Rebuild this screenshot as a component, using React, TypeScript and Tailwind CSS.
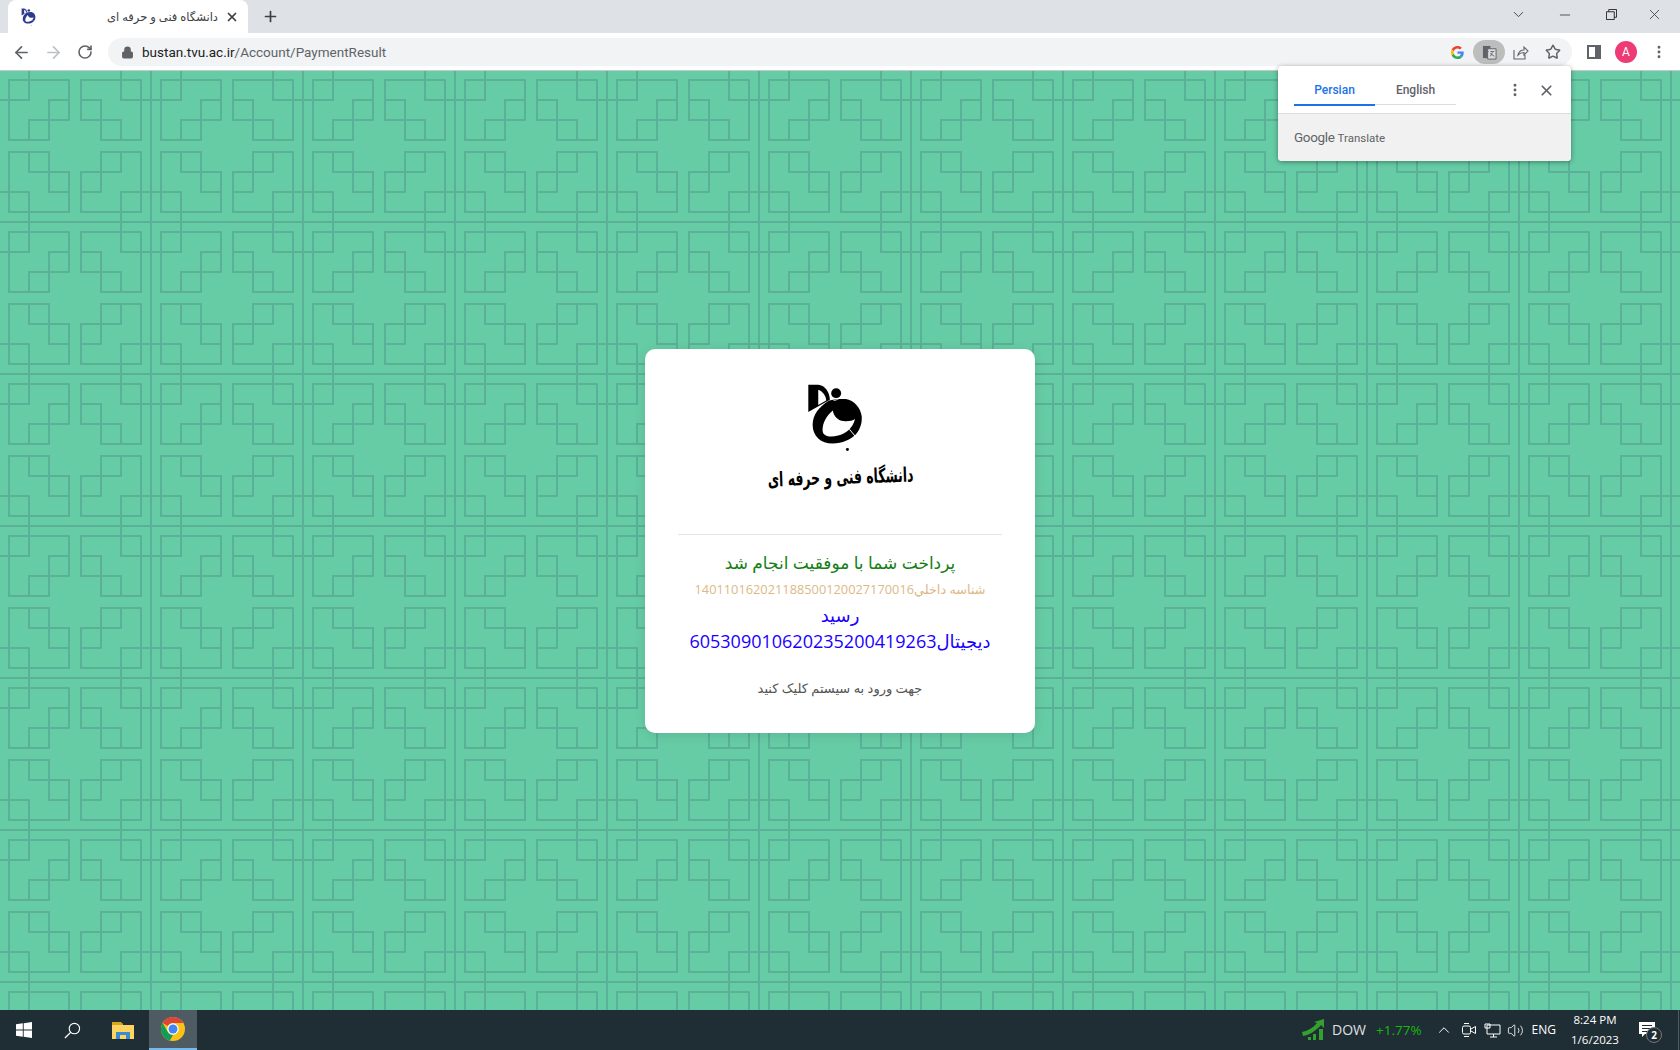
import { Plus, X, ArrowLeft, ArrowRight, RotateCw, Lock, ChevronDown, Minus, Star, MoreVertical, ChevronUp, Volume2 } from 'lucide-react'

const FA = 'font-["Open_Sans","DejaVu_Sans",sans-serif]'

function LatticeBackground() {
  return (
    <svg className="absolute inset-0 h-full w-full" aria-hidden="true">
      <defs>
        <pattern id="lattice" x="0" y="-1" width="152" height="152" patternUnits="userSpaceOnUse">
          <g fill="none" stroke="#5ab197" strokeWidth="2">
            <path d="M9 10H69V50H49V70H9Z" />
            <path d="M29 0V30H0M49 50H29V70M49 50V30H69" />
            <path d="M141 10H81V50H101V70H141Z" />
            <path d="M121 0V30H152M101 50H121V70M101 50V30H81" />
            <path d="M9 142H69V102H49V82H9Z" />
            <path d="M29 152V122H0M49 102H29V82M49 102V122H69" />
            <path d="M141 142H81V102H101V82H141Z" />
            <path d="M121 152V122H152M101 102H121V82M101 102V122H81" />
            <path d="M151 0V152M0 152H152M0 0H152" />
          </g>
        </pattern>
      </defs>
      <rect width="100%" height="100%" fill="url(#lattice)" />
    </svg>
  )
}

function LogoMark({ color, className }: { color: string; className: string }) {
  return (
    <svg viewBox="15 10 175 210" className={className} aria-hidden="true">
      <path d="M85 62C55 80 35 105 35 135C35 170 60 192 95 192C125 192 150 180 165 165C178 150 185 130 183 110C180 85 160 62 135 58L110 58Z" fill={color} />
      <path d="M22 15H52C72 17 86 36 87 60L22 97Z" fill={color} />
      <path d="M52 30C66 36 75 48 76 62L52 76Z" fill="#fff" />
      <circle cx="106" cy="40" r="15" fill={color} />
      <path d="M98 62C106 62 114 58 119 52" fill="none" stroke="#fff" strokeWidth="2.500" />
      <path d="M96 92C75 110 65 130 65 152C65 172 90 174 112 168C135 162 155 148 163 118C155 124 140 126 128 124C110 122 98 108 96 92Z" fill="#fff" />
      <path d="M146 149L166 173" fill="none" stroke="#fff" strokeWidth="3" />
      <circle cx="140" cy="210" r="4.500" fill={color} />
    </svg>
  )
}

function ChromeIcon() {
  return (
    <svg viewBox="0 0 48 48" className="h-6 w-6" aria-hidden="true">
      <circle cx="24" cy="24" r="24" fill="#fbc116" />
      <path d="M24 0A24 24 0 0 1 44.8 12H24A12 12 0 0 0 13.6 18L3.2 12A24 24 0 0 1 24 0Z" fill="#db4437" />
      <path d="M3.2 12L13.6 30A12 12 0 0 0 24 36L17.5 47.1A24 24 0 0 1 3.2 12Z" fill="#0f9d58" />
      <circle cx="24" cy="24" r="11.5" fill="#fff" />
      <circle cx="24" cy="24" r="9" fill="#4285f4" />
    </svg>
  )
}

function GoogleG() {
  return (
    <svg viewBox="0 0 48 48" className="h-[13px] w-[13px]" aria-hidden="true">
      <path fill="#ea4335" d="M24 9.500c3.500 0 6.700 1.300 9.100 3.500l6.800-6.800C35.800 2.400 30.200 0 24 0 14.600 0 6.500 5.400 2.600 13.200l7.900 6.100C12.400 13.600 17.700 9.500 24 9.500z" />
      <path fill="#4285f4" d="M46.900 24.500c0-1.600-.1-3.100-.4-4.500H24v9h12.900c-.6 3-2.200 5.500-4.700 7.200l7.700 6c4.500-4.200 7-10.300 7-17.700z" />
      <path fill="#fbbc05" d="M10.500 28.700c-.5-1.400-.8-3-.8-4.700s.3-3.200.8-4.700l-7.900-6.100C.9 16.500 0 20.100 0 24s.9 7.500 2.600 10.800l7.900-6.100z" />
      <path fill="#34a853" d="M24 48c6.500 0 11.900-2.100 15.900-5.800l-7.700-6c-2.200 1.400-4.900 2.300-8.200 2.300-6.300 0-11.600-4.200-13.500-9.900l-7.900 6.200C6.500 42.600 14.600 48 24 48z" />
    </svg>
  )
}

function TabStrip() {
  return (
    <div className="flex h-[33px] items-end bg-[#dee1e6]">
      <div className="ml-2 flex h-[33px] w-[240px] items-center rounded-t-lg bg-white pl-[13px] pr-[9px]">
        <LogoMark color="#2e3a8c" className="h-[18px] w-[15px]" />
        <span dir="rtl" className={`ml-auto text-[11.5px] text-[#3c4043] ${FA}`}>دانشگاه فنی و حرفه ای</span>
        <X className="ml-[7px] h-[14px] w-[14px] text-[#3c4043]" strokeWidth={3} />
      </div>
      <Plus className="mb-2 ml-[14px] h-[17px] w-[17px] text-[#3c4043]" strokeWidth={2.4} />
      <div className="ml-auto flex h-[33px] items-center pb-[4px] text-[#3c4043]">
        <ChevronDown className="mr-[30px] h-[17px] w-[17px]" strokeWidth={1.3} />
        <Minus className="mr-[33px] h-4 w-4" strokeWidth={1.3} />
        <svg viewBox="0 0 12 12" className="mr-[29px] h-[11px] w-[11px]" aria-hidden="true">
          <path d="M.5 3H9V11.500H.5ZM3 3V.5H11.500V9H9" fill="none" stroke="#202124" />
        </svg>
        <X className="mr-[17px] h-[17px] w-[17px]" strokeWidth={1.2} />
      </div>
    </div>
  )
}

function Toolbar() {
  return (
    <div className="flex h-[38px] items-center border-b border-[#c8c8c8] bg-white pt-px">
      <ArrowLeft className="ml-[12px] h-[19px] w-[19px] text-[#5f6368]" strokeWidth={2.2} />
      <ArrowRight className="ml-[13px] h-[19px] w-[19px] text-[#bdc1c6]" strokeWidth={2.2} />
      <RotateCw className="ml-[14px] h-[16px] w-[16px] text-[#5f6368]" strokeWidth={2.4} />
      <div className="ml-[15px] flex h-[28px] w-[1464px] items-center rounded-full bg-[#f1f3f4] pl-[13px] pr-[11px]">
        <Lock className="h-[13px] w-[13px] fill-[#5f6368] text-[#5f6368]" />
        <span className='ml-[8px] font-["Roboto",sans-serif] text-[13.5px] text-[#5f6368]'>
          <span className="text-[#202124]">bustan.tvu.ac.ir</span>/Account/PaymentResult
        </span>
        <div className="ml-auto flex items-center">
          <GoogleG />
          <div className="ml-[9px] flex h-[24px] w-[32px] items-center justify-center rounded-full bg-[#bdbdbd]">
            <svg viewBox="0 0 16 16" className="h-[15px] w-[15px]" aria-hidden="true">
              <path d="M1 1H9V14H1Z" fill="#5f6368" />
              <path d="M6 4H15V15H6Z" fill="#dadce0" stroke="#5f6368" />
              <path d="M3 7H7M9 7H13M11 8L9 12M9 9L13 12" stroke="#5f6368" strokeWidth="1" fill="none" />
            </svg>
          </div>
          <svg viewBox="0 0 16 16" className="ml-[8px] h-[16px] w-[16px]" aria-hidden="true">
            <path d="M1 6V15H12V11M5 11C6 7 9 6 11 6V3L15 7L11 11V8.500C9 8.500 7 9 5 11Z" fill="none" stroke="#5f6368" strokeWidth="1.100" />
          </svg>
          <Star className="ml-[16px] h-[16px] w-[16px] text-[#5f6368]" strokeWidth={2.2} />
        </div>
      </div>
      <div className="ml-[15px] flex h-[14px] w-[14px] justify-end border-2 border-[#5f6368] bg-white">
        <div className="h-full w-[4px] bg-[#5f6368]" />
      </div>
      <div className="ml-[14px] flex h-[22px] w-[22px] items-center justify-center rounded-full bg-[#ee3a75] font-['Roboto',sans-serif] text-xs text-white">A</div>
      <MoreVertical className="ml-[14px] h-[16px] w-[16px] text-[#5f6368]" strokeWidth={2.4} />
    </div>
  )
}

function TranslatePopup() {
  return (
    <div className="absolute right-[109px] top-[-5px] z-10 w-[293px] overflow-hidden rounded bg-white font-['Roboto',sans-serif] shadow-[0_1px_5px_rgba(0,0,0,0.4)]">
      <div className="flex h-[48px] border-b border-[#dadce0] pl-4 pr-4">
        <div className="flex h-[39px] w-[162px] border-b border-[#dadce0] pt-[16px] leading-4">
          <span className="-mb-px flex h-[24px] w-[81px] justify-center border-b-2 border-[#1a73e8] text-xs font-medium text-[#1a73e8]">Persian</span>
          <span className="flex w-[81px] justify-center text-xs font-medium text-[#5f6368]">English</span>
        </div>
        <MoreVertical className="ml-[51px] mt-[16px] h-[16px] w-[16px] text-[#5f6368]" strokeWidth={2.4} />
        <X className="ml-[15px] mt-[16px] h-[17px] w-[17px] text-[#5f6368]" strokeWidth={2.4} />
      </div>
      <div className="flex h-[47px] items-baseline bg-[#f1f1f1] pl-4 pt-[13px] text-[#5f6368]">
        <span className="text-[13.5px] tracking-tight">Google</span>
        <span className="ml-[3px] text-[11.5px]">Translate</span>
      </div>
    </div>
  )
}

function PaymentCard() {
  return (
    <div dir="rtl" className={`relative flex w-[390px] flex-col items-center rounded-[10px] bg-white px-[33px] pb-[34px] pt-[34px] text-center shadow-[0_2px_12px_rgba(0,0,0,0.1)] ${FA}`}>
      <LogoMark color="#000" className="ml-0 mr-[10px] h-[70px] w-[58px]" />
      <div className='mb-[40px] mt-[4px] h-[37px] -rotate-2 scale-x-[0.62] whitespace-nowrap font-["DejaVu_Sans",sans-serif] text-[20px] font-bold leading-[40px] text-black'>دانشگاه فنی و حرفه ای</div>
      <div className="h-px w-full bg-[#e5e5e5]" />
      <div className="mt-[15px] text-[17px] leading-[26px] text-[#138013]">پرداخت شما با موفقیت انجام شد</div>
      <div className="mt-px whitespace-nowrap text-[12.8px] leading-[24px] text-[#deb887]">شناسه داخلي140110162021188500120027170016</div>
      <div className="mt-px whitespace-nowrap text-[18px] leading-[26px] text-[#1a00ff]">
        رسید
        <br />
        دیجیتال605309010620235200419263
      </div>
      <div className="mt-[23px] text-[13px] leading-[22px] text-[#555]">جهت ورود به سیستم کلیک کنید</div>
    </div>
  )
}

function Taskbar() {
  return (
    <div className="flex h-10 items-center bg-[#1f2d35] font-['Open_Sans',sans-serif] text-white">
      <svg viewBox="0 0 16 16" className="ml-4 h-4 w-4" aria-hidden="true">
        <path d="M0 2.300L6.800 1.300V7.600H0ZM7.700 1.200L16 0V7.600H7.700ZM0 8.400H6.800V14.700L0 13.700ZM7.700 8.400H16V16L7.700 14.800Z" fill="#fff" />
      </svg>
      <svg viewBox="0 0 18 18" className="ml-[32px] h-[17px] w-[17px]" aria-hidden="true">
        <circle cx="11" cy="7" r="5.500" fill="none" stroke="#fff" strokeWidth="1.200" />
        <path d="M7 11L1 17" stroke="#fff" strokeWidth="1.400" />
      </svg>
      <svg viewBox="0 0 22 18" className="ml-[31px] h-[18px] w-[22px]" aria-hidden="true">
        <path d="M0 1H9L11 3V6H0Z" fill="#d9a520" />
        <path d="M0 4H22V18H0Z" fill="#fcd462" />
        <path d="M4 18V11H18V18H14V14H8V18Z" fill="#3a8bd0" />
      </svg>
      <div className="ml-[15px] flex h-10 w-12 items-center justify-center border-b-[2px] border-[#76b9ed] bg-[#4f5b62]">
        <ChromeIcon />
      </div>
      <div className="ml-auto flex items-center">
        <svg viewBox="0 0 24 22" className="h-[22px] w-[24px]" aria-hidden="true">
          <path d="M1 13C6 12 12 9 16 4L13 3L23 0L23 9L20 6C15 12 8 16 2 17Z" fill="#35a02f" />
          <path d="M7 18H10V21H7ZM12 15H15V21H12ZM18 10H22V21H18Z" fill="#35a02f" />
        </svg>
        <span className="ml-[7px] text-sm text-[#e0e0e0]">DOW</span>
        <span className="ml-[10px] text-[13.5px] text-[#16b80c]">+1.77%</span>
        <ChevronUp className="ml-[13px] h-[18px] w-[18px]" strokeWidth={1.3} />
        <svg viewBox="0 0 16 16" className="ml-[8px] h-4 w-4" aria-hidden="true">
          <rect x="1.500" y="4" width="8" height="8" rx="1.500" fill="none" stroke="#fff" />
          <path d="M10 7L14.500 4.500V11.500L10 9M3 1.500H8M3 14.500H8" fill="none" stroke="#fff" />
        </svg>
        <svg viewBox="0 0 17 15" className="ml-[7px] h-[15px] w-[17px]" aria-hidden="true">
          <path d="M3 2H16V11H3ZM1 1H6V5H1ZM9.500 11V14M6 14H13" fill="#1f2d35" stroke="#fff" />
        </svg>
        <Volume2 className="ml-[6px] h-[17px] w-[17px]" strokeWidth={1.2} />
        <span className="ml-[8px] text-xs">ENG</span>
        <div className="ml-[9px] w-[60px] text-center text-[11.5px] leading-[20px]">
          <div>8:24 PM</div>
          <div>1/6/2023</div>
        </div>
        <div className="relative ml-[14px] h-[16px] w-[16px]">
          <svg viewBox="0 0 16 16" className="h-4 w-4" aria-hidden="true">
            <path d="M0 0H16V12H6L3 15V12H0Z" fill="#fff" />
            <path d="M3 3.500H13M3 6.500H13M3 9.500H10" stroke="#1f2d35" />
          </svg>
          <span className="absolute left-[7px] top-[5px] flex h-4 w-4 items-center justify-center rounded-full border border-[#777] bg-[#1f2d35] text-[10px] font-bold">2</span>
        </div>
        <div className="ml-[23px] h-10 w-px bg-[#4f5b62]" />
        <div className="w-px" />
      </div>
    </div>
  )
}

export default function App() {
  return (
    <div className="flex h-screen flex-col overflow-hidden">
      <TabStrip />
      <Toolbar />
      <main className="relative flex flex-1 items-center justify-center bg-[#66cca5]">
        <LatticeBackground />
        <TranslatePopup />
        <PaymentCard />
      </main>
      <Taskbar />
    </div>
  )
}
